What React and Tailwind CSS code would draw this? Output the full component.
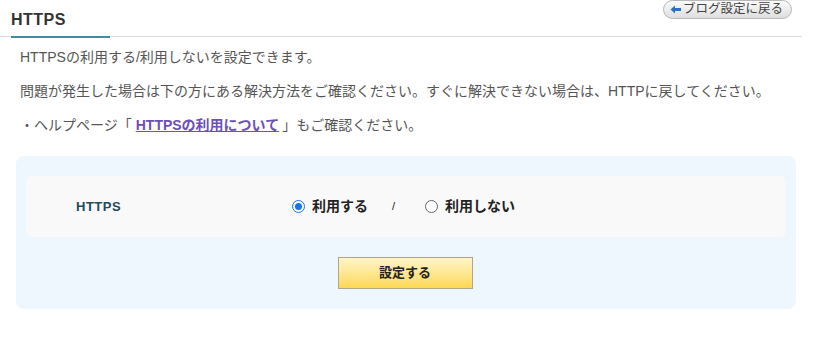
export default function App() {
  const font = { fontFamily: '"Liberation Sans", Arial, "Noto Sans CJK JP", sans-serif' };
  return (
    <div className="w-[818px] h-[342px] bg-white relative overflow-hidden text-[#555]" style={font}>
      <div className="absolute right-[26px] top-0 h-[19px] pl-[6px] pr-[8px] flex items-center gap-[1px] rounded-full border border-[#b8b8b8] bg-gradient-to-b from-[#fbfbfb] to-[#dedede] text-[12.5px] text-[#444] leading-none">
        <svg width="12" height="9" viewBox="0 0 11 9">
          <path d="M0 4.5 L4.5 0.5 L4.5 3 L10.5 3 L10.5 6 L4.5 6 L4.5 8.5 Z" fill="#2a72c8" />
        </svg>
        <span>ブログ設定に戻る</span>
      </div>
      <div className="pl-[11px] pt-[10px] w-[802px]">
        <div className="text-[16px] font-bold text-[#333] leading-[20px] tracking-[0.5px]">HTTPS</div>
        <div className="mt-[6px] h-[1px] bg-[#dcdcdc] relative -ml-[11px]">
          <div className="absolute left-[11px] top-[-0.5px] h-[2px] w-[99px] bg-[#3d8ea0]" />
        </div>
      </div>
      <div className="pl-[20px] text-[14px] leading-[17px]">
        <p className="mt-[12px]">HTTPSの利用する/利用しないを設定できます。</p>
        <p className="mt-[17px]">問題が発生した場合は下の方にある解決方法をご確認ください。すぐに解決できない場合は、HTTPに戻してください。</p>
        <p className="mt-[17px]">
          ・ヘルプページ「
          <a className="ml-[4px] mr-[3px] font-bold text-[#6c4fb8] underline">HTTPSの利用について</a>
          」もご確認ください。
        </p>
      </div>
      <div className="mt-[22px] mx-[16px] w-[780px] h-[153px] rounded-[8px] bg-[#eef6fe] pt-[20px] px-[10px]">
        <div className="h-[61px] rounded-[6px] bg-[#f9f9f9] flex items-center">
          <div className="w-[266px] pl-[50px] text-[13px] font-bold text-[#234a5a] tracking-[0.5px]">HTTPS</div>
          <div className="flex items-center text-[14px] font-bold text-[#222]">
            <span className="w-[13px] h-[13px] rounded-full border border-[#1a73e8] flex items-center justify-center bg-white">
              <span className="w-[7px] h-[7px] rounded-full bg-[#1a73e8]" />
            </span>
            <span className="ml-[7px]">利用する</span>
            <span className="ml-[24px] font-normal text-[11px]">/</span>
            <span className="ml-[30px] w-[13px] h-[13px] rounded-full border border-[#666] bg-white" />
            <span className="ml-[7px]">利用しない</span>
          </div>
        </div>
        <div className="flex justify-center mt-[20px]">
          <div className="-ml-[2px] w-[135px] h-[32px] border border-[#b0a68a] bg-gradient-to-b from-[#fff6c8] to-[#fdd850] flex items-center justify-center text-[13px] font-bold text-[#222]">
            設定する
          </div>
        </div>
      </div>
    </div>
  );
}
